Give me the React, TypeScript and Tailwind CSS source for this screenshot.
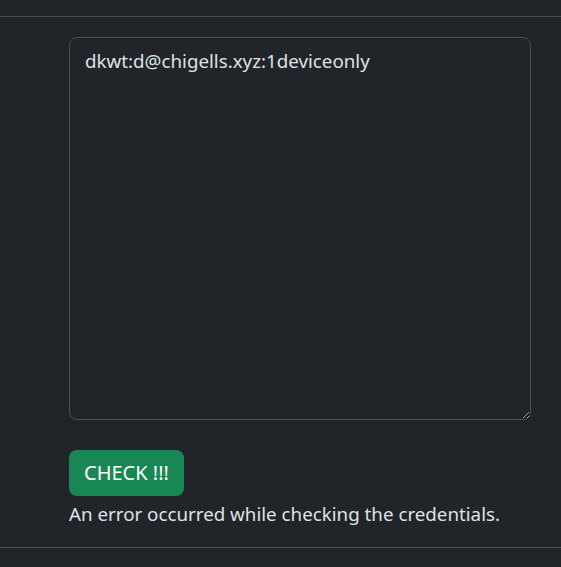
import { useState } from 'react';

export default function App() {
  const [value, setValue] = useState('dkwt:d@chigells.xyz:1deviceonly');

  return (
    <div className="min-h-screen w-full bg-[#212529] text-[#dee2e6] font-['Noto_Sans',sans-serif]">
      <div className="h-4" />
      <div className="border-t border-b border-[#495057] pl-[69px] pr-[30px] pt-5 pb-[18px]">
        <textarea
          value={value}
          onChange={(e) => setValue(e.target.value)}
          className="block h-[383px] w-[462px] rounded-lg border border-[#495057] bg-[#212529] py-2 pl-[15px] pr-4 text-[18.75px] leading-[30px] text-[#dee2e6] outline-none"
        />
        <button className="mt-[30px] block h-[46px] rounded-lg bg-[#198754] px-[15px] text-[20px] leading-[30px] text-white">
          CHECK !!!
        </button>
        <div className="mt-[3px] text-[18.75px] leading-[30px]">An error occurred while checking the credentials.</div>
      </div>
    </div>
  );
}
